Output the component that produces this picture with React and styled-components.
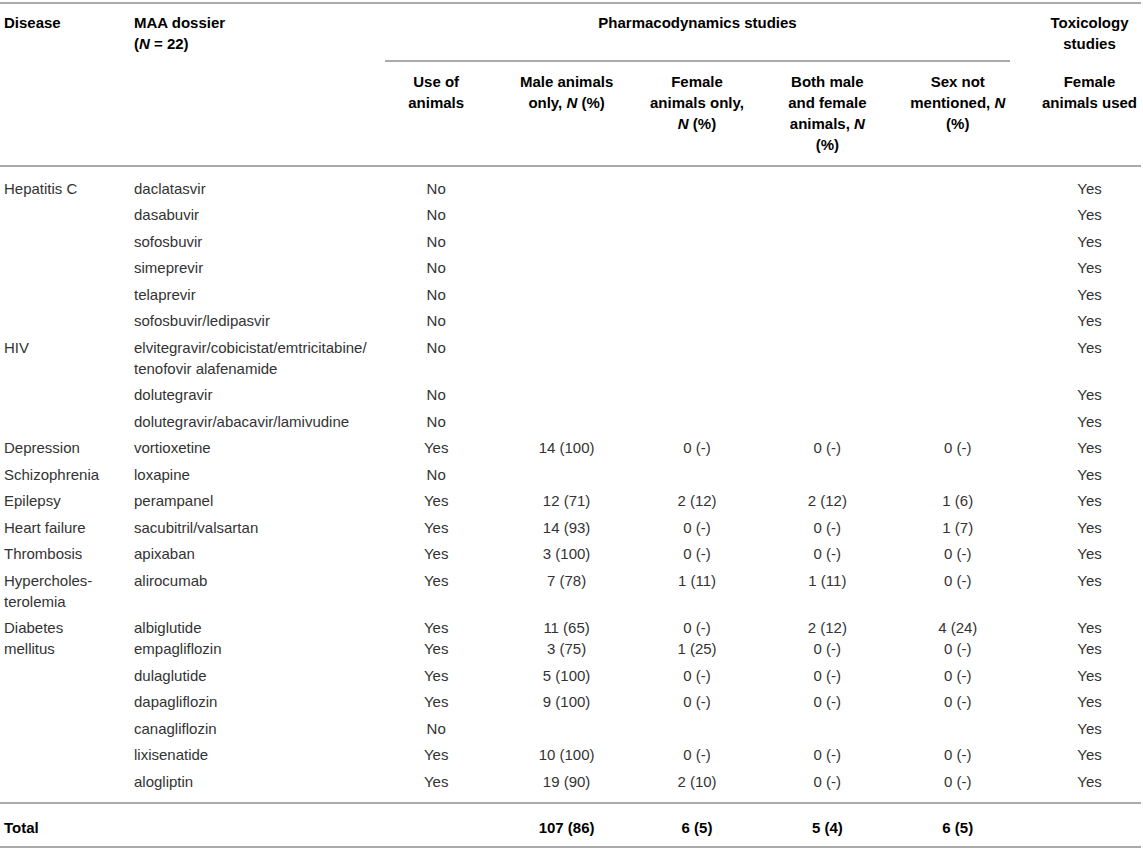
import React from 'react'
import styled, { createGlobalStyle } from 'styled-components'

const GlobalStyle = createGlobalStyle`
  body {
    margin: 0;
    background: #fff;
    font-family: "Liberation Sans", Arial, Helvetica, sans-serif;
  }
`

const RULE = '2px solid #a9a9a9'

const Page = styled.div`
  padding-top: 2px;
  width: 1143px;
`

const Table = styled.table`
  width: 1141px;
  border-collapse: separate;
  border-spacing: 0;
  table-layout: fixed;
  font-size: 15px;
  line-height: 21px;
  color: #333;
`

const Col = styled.col`
  width: ${p => p.$w}px;
`

const HeadCell = styled.th`
  font-weight: bold;
  color: #000;
  vertical-align: top;
  white-space: nowrap;
  text-align: ${p => (p.$left ? 'left' : 'center')};
  padding: ${p => (p.$upper ? '7.5px 4px 8.5px' : '8.5px 4px 10.5px')};
  padding-left: ${p => (p.$tox ? '19px' : '4px')};
  border-top: ${p => (p.$upper ? RULE : 'none')};
  border-bottom: ${p => (p.$ruled ? RULE : 'none')};

  em {
    font-style: italic;
  }
`

const GroupCell = styled.th`
  font-weight: bold;
  color: #000;
  vertical-align: top;
  text-align: center;
  padding: 7.5px 0 0;
  border-top: ${RULE};
`

const GroupRule = styled.div`
  margin: 0 13px 0 14px;
  padding-bottom: 27.5px;
  border-bottom: ${RULE};
`

const Row = styled.tr`
  & > td {
    padding-top: ${p => (p.$first ? '10.5px' : '3px')};
    padding-bottom: ${p => (p.$last ? '10.5px' : '2.5px')};
    border-bottom: ${p => (p.$last ? RULE : 'none')};
  }
`

const Cell = styled.td`
  vertical-align: top;
  text-align: ${p => (p.$left ? 'left' : 'center')};
  padding-left: ${p => (p.$tox ? '19px' : '4px')};
  padding-right: 4px;
  white-space: nowrap;
`

const TotalRow = styled.tr`
  & > td {
    padding-top: 12.5px;
    padding-bottom: 8.5px;
    border-bottom: ${RULE};
    font-weight: bold;
    color: #000;
  }
`

const rows = [
  ['Hepatitis C', 'daclatasvir', 'No', '', '', '', '', 'Yes'],
  ['', 'dasabuvir', 'No', '', '', '', '', 'Yes'],
  ['', 'sofosbuvir', 'No', '', '', '', '', 'Yes'],
  ['', 'simeprevir', 'No', '', '', '', '', 'Yes'],
  ['', 'telaprevir', 'No', '', '', '', '', 'Yes'],
  ['', 'sofosbuvir/ledipasvir', 'No', '', '', '', '', 'Yes'],
  ['HIV', ['elvitegravir/cobicistat/emtricitabine/', 'tenofovir alafenamide'], 'No', '', '', '', '', 'Yes'],
  ['', 'dolutegravir', 'No', '', '', '', '', 'Yes'],
  ['', 'dolutegravir/abacavir/lamivudine', 'No', '', '', '', '', 'Yes'],
  ['Depression', 'vortioxetine', 'Yes', '14 (100)', '0 (-)', '0 (-)', '0 (-)', 'Yes'],
  ['Schizophrenia', 'loxapine', 'No', '', '', '', '', 'Yes'],
  ['Epilepsy', 'perampanel', 'Yes', '12 (71)', '2 (12)', '2 (12)', '1 (6)', 'Yes'],
  ['Heart failure', 'sacubitril/valsartan', 'Yes', '14 (93)', '0 (-)', '0 (-)', '1 (7)', 'Yes'],
  ['Thrombosis', 'apixaban', 'Yes', '3 (100)', '0 (-)', '0 (-)', '0 (-)', 'Yes'],
  [['Hypercholes-', 'terolemia'], 'alirocumab', 'Yes', '7 (78)', '1 (11)', '1 (11)', '0 (-)', 'Yes'],
  [
    ['Diabetes', 'mellitus'],
    ['albiglutide', 'empagliflozin'],
    ['Yes', 'Yes'],
    ['11 (65)', '3 (75)'],
    ['0 (-)', '1 (25)'],
    ['2 (12)', '0 (-)'],
    ['4 (24)', '0 (-)'],
    ['Yes', 'Yes']
  ],
  ['', 'dulaglutide', 'Yes', '5 (100)', '0 (-)', '0 (-)', '0 (-)', 'Yes'],
  ['', 'dapagliflozin', 'Yes', '9 (100)', '0 (-)', '0 (-)', '0 (-)', 'Yes'],
  ['', 'canagliflozin', 'No', '', '', '', '', 'Yes'],
  ['', 'lixisenatide', 'Yes', '10 (100)', '0 (-)', '0 (-)', '0 (-)', 'Yes'],
  ['', 'alogliptin', 'Yes', '19 (90)', '2 (10)', '0 (-)', '0 (-)', 'Yes']
]

const totals = ['Total', '', '', '107 (86)', '6 (5)', '5 (4)', '6 (5)', '']

const lines = (value) => {
  if (!Array.isArray(value)) return value
  return value.map((line, i) => (
    <React.Fragment key={i}>
      {i > 0 && <br />}
      {line}
    </React.Fragment>
  ))
}

const renderCells = (row) =>
  row.map((value, i) => (
    <Cell key={i} $left={i < 2} $tox={i === 7}>
      {lines(value)}
    </Cell>
  ))

const App = () => {
  return (
    <Page>
      <GlobalStyle />
      <Table>
        <colgroup>
          <Col $w={130} />
          <Col $w={241} />
          <Col $w={130.4} />
          <Col $w={130.4} />
          <Col $w={130.4} />
          <Col $w={130.4} />
          <Col $w={130.4} />
          <Col $w={118} />
        </colgroup>
        <thead>
          <tr>
            <HeadCell rowSpan={2} $upper $ruled $left>Disease</HeadCell>
            <HeadCell rowSpan={2} $upper $ruled $left>
              MAA dossier<br />(<em>N</em> = 22)
            </HeadCell>
            <GroupCell colSpan={5}>
              <GroupRule>Pharmacodynamics studies</GroupRule>
            </GroupCell>
            <HeadCell $upper $tox>Toxicology<br />studies</HeadCell>
          </tr>
          <tr>
            <HeadCell $ruled>Use of<br />animals</HeadCell>
            <HeadCell $ruled>Male animals<br />only, <em>N</em> (%)</HeadCell>
            <HeadCell $ruled>Female<br />animals only,<br /><em>N</em> (%)</HeadCell>
            <HeadCell $ruled>Both male<br />and female<br />animals, <em>N</em><br />(%)</HeadCell>
            <HeadCell $ruled>Sex not<br />mentioned, <em>N</em><br />(%)</HeadCell>
            <HeadCell $ruled $tox>Female<br />animals used</HeadCell>
          </tr>
        </thead>
        <tbody>
          {rows.map((row, i) => (
            <Row key={i} $first={i === 0} $last={i === rows.length - 1}>
              {renderCells(row)}
            </Row>
          ))}
          <TotalRow>{renderCells(totals)}</TotalRow>
        </tbody>
      </Table>
    </Page>
  )
}

export default App
